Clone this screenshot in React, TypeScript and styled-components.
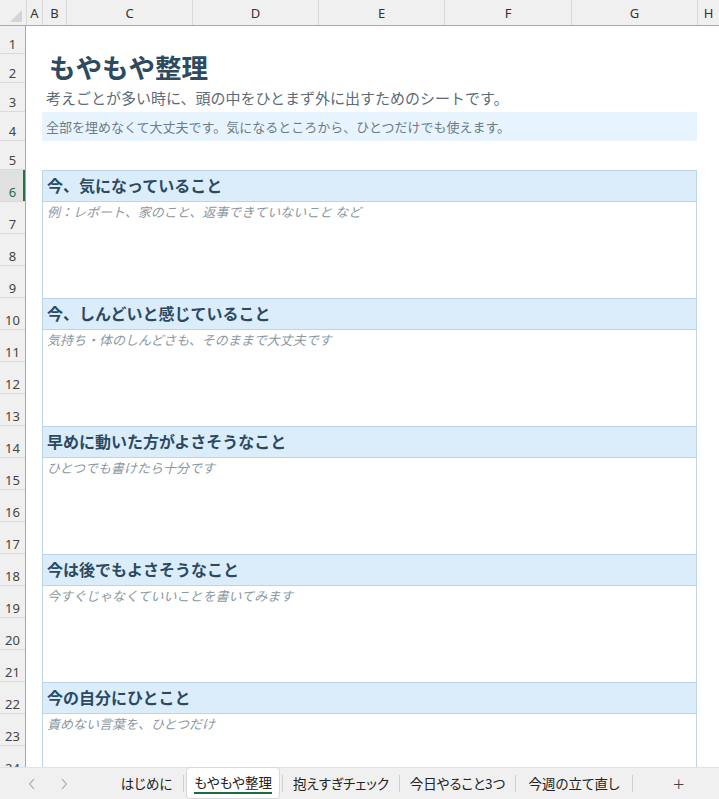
import React from "react";
import styled, { createGlobalStyle } from "styled-components";

const GlobalStyle = createGlobalStyle`
  html, body {
    margin: 0;
    padding: 0;
    background: #ffffff;
    overflow: hidden;
  }
  body {
    font-family: "Noto Sans CJK JP", "Noto Sans", sans-serif;
  }
`;

const COLUMNS = [
  { label: "A", width: 16 },
  { label: "B", width: 24 },
  { label: "C", width: 126 },
  { label: "D", width: 126 },
  { label: "E", width: 126 },
  { label: "F", width: 127 },
  { label: "G", width: 126 },
  { label: "H", width: 22 },
];

// 1〜5行目は29px、6行目以降は32px
const ROW_HEIGHTS = [28, 29, 29, 29, 29, ...Array(19).fill(32)];
const SELECTED_ROW = 6;

const SECTIONS = [
  { title: "今、気になっていること", hint: "例：レポート、家のこと、返事できていないこと など" },
  { title: "今、しんどいと感じていること", hint: "気持ち・体のしんどさも、そのままで大丈夫です" },
  { title: "早めに動いた方がよさそうなこと", hint: "ひとつでも書けたら十分です" },
  { title: "今は後でもよさそうなこと", hint: "今すぐじゃなくていいことを書いてみます" },
  { title: "今の自分にひとこと", hint: "責めない言葉を、ひとつだけ" },
];

const TABS = [
  { label: "はじめに", width: 73 },
  { label: "もやもや整理", width: 94, active: true },
  { label: "抱えすぎチェック", width: 116 },
  { label: "今日やること3つ", width: 115 },
  { label: "今週の立て直し", width: 116 },
];

const Window = styled.div`
  width: 719px;
  height: 799px;
  display: flex;
  flex-direction: column;
  overflow: hidden;
`;

const ColumnBar = styled.div`
  display: flex;
  height: 26px;
  flex-shrink: 0;
  background: #f0f0f0;
  border-bottom: 1px solid #a9a9a9;
  box-sizing: border-box;
`;

const Corner = styled.div`
  width: 26px;
  flex-shrink: 0;
  position: relative;
`;

const CornerMark = styled.div`
  position: absolute;
  right: 4px;
  bottom: 3px;
  width: 0;
  height: 0;
  border-left: 12px solid transparent;
  border-bottom: 12px solid #d4d4d4;
`;

const ColumnCell = styled.div<{ $width: number }>`
  width: ${(p) => p.$width}px;
  flex-shrink: 0;
  box-sizing: border-box;
  border-left: 1px solid #d9d9d9;
  display: flex;
  align-items: center;
  justify-content: center;
  font-family: "Noto Sans", "Open Sans", sans-serif;
  font-size: 13px;
  color: #333;
`;

const Main = styled.div`
  flex: 1;
  display: flex;
  overflow: hidden;
`;

const RowHeaders = styled.div`
  width: 26px;
  flex-shrink: 0;
  background: #f0f0f0;
  border-right: 1px solid #a9a9a9;
  box-sizing: border-box;
  display: flex;
  flex-direction: column;
`;

const RowNum = styled.div<{ $height: number; $selected?: boolean }>`
  height: ${(p) => p.$height}px;
  flex-shrink: 0;
  box-sizing: border-box;
  border-bottom: 1px solid #dadada;
  display: flex;
  align-items: flex-end;
  justify-content: center;
  line-height: 18px;
  font-family: "Noto Sans", "Open Sans", sans-serif;
  font-size: 13px;
  color: ${(p) => (p.$selected ? "#1e6e42" : "#444")};
  background: ${(p) => (p.$selected ? "#e1e1e1" : "transparent")};
  box-shadow: ${(p) => (p.$selected ? "inset -2px 0 0 #217346" : "none")};
`;

const Sheet = styled.div`
  flex: 1;
  padding-left: 16px;
  display: flex;
  flex-direction: column;
`;

const Row = styled.div<{ $height: number }>`
  height: ${(p) => p.$height}px;
  flex-shrink: 0;
  display: flex;
  align-items: center;
`;

const Title = styled.h1`
  margin: 0 0 2px 7px;
  font-size: 26.5px;
  font-weight: 700;
  color: #2e4a5e;
  line-height: 1;
`;

const Lead = styled.p`
  margin: 0 0 0 4px;
  font-size: 15px;
  color: #5c6b77;
`;

const Note = styled.div`
  width: 655px;
  height: 100%;
  background: #e8f4fd;
  display: flex;
  align-items: center;
  padding-left: 4px;
  box-sizing: border-box;
  font-size: 13px;
  color: #6d7b87;
`;

const Section = styled.section`
  width: 655px;
  flex-shrink: 0;
  box-sizing: border-box;
  border-left: 1px solid #bdd6e6;
  border-right: 1px solid #bdd6e6;
`;

const SectionHead = styled.div`
  height: 32px;
  box-sizing: border-box;
  border-top: 1px solid #bdd6e6;
  border-bottom: 1px solid #bdd6e6;
  background: #dbedfb;
  display: flex;
  align-items: center;
  padding: 0 0 3px 4px;
  font-size: 16px;
  font-weight: 700;
  color: #2c4a5f;
`;

const SectionBody = styled.div`
  height: 96px;
  box-sizing: border-box;
  padding: 0 4px;
  font-size: 13px;
  font-style: italic;
  color: #8c98a2;
  line-height: 20px;
`;

const TabBar = styled.div`
  height: 32px;
  flex-shrink: 0;
  background: #f0f0f0;
  border-top: 1px solid #e2e2e2;
  box-sizing: border-box;
  display: flex;
  align-items: center;
  font-size: 13.5px;
  color: #222;
  font-feature-settings: "palt";
`;

const Nav = styled.div`
  width: 110px;
  flex-shrink: 0;
  display: flex;
  align-items: center;
  gap: 24px;
  padding-left: 28px;
  box-sizing: border-box;
`;

const Tab = styled.div<{ $width: number; $active?: boolean }>`
  width: ${(p) => p.$width}px;
  height: ${(p) => (p.$active ? "32px" : "auto")};
  flex-shrink: 0;
  display: flex;
  align-items: center;
  justify-content: center;
  box-sizing: border-box;
  margin: ${(p) => (p.$active ? "-2px 2px 0" : "0")};
  background: ${(p) => (p.$active ? "#ffffff" : "transparent")};
  border: ${(p) => (p.$active ? "1px solid #d8d8d8" : "none")};
  border-radius: 4px;
`;

const TabLabel = styled.span<{ $active?: boolean }>`
  padding-bottom: 1px;
  border-bottom: 2px solid ${(p) => (p.$active ? "#1e6b40" : "transparent")};
  line-height: 18px;
  margin-top: 1px;
`;

const Divider = styled.div`
  width: 1px;
  height: 17px;
  flex-shrink: 0;
  background: #cfcfcf;
`;

const AddButton = styled.div`
  margin-left: 40px;
  font-size: 20px;
  font-weight: 300;
  color: #444;
  font-family: "Noto Sans", sans-serif;
`;

const Chevron: React.FC<{ dir: "left" | "right" }> = ({ dir }) => (
  <svg width="8" height="12" viewBox="0 0 8 12">
    <polyline
      points={dir === "left" ? "6,1 1.5,6 6,11" : "2,1 6.5,6 2,11"}
      fill="none"
      stroke="#b3b3b3"
      strokeWidth="1.2"
    />
  </svg>
);

const App: React.FC = () => {
  return (
    <Window>
      <GlobalStyle />
      <ColumnBar>
        <Corner>
          <CornerMark />
        </Corner>
        {COLUMNS.map((c) => (
          <ColumnCell key={c.label} $width={c.width}>
            {c.label}
          </ColumnCell>
        ))}
      </ColumnBar>

      <Main>
        <RowHeaders>
          {ROW_HEIGHTS.map((h, i) => (
            <RowNum key={i} $height={h} $selected={i + 1 === SELECTED_ROW}>
              {i + 1}
            </RowNum>
          ))}
        </RowHeaders>

        <Sheet>
          <Row $height={28} />
          <Row $height={29}>
            <Title>もやもや整理</Title>
          </Row>
          <Row $height={29}>
            <Lead>考えごとが多い時に、頭の中をひとまず外に出すためのシートです。</Lead>
          </Row>
          <Row $height={29}>
            <Note>全部を埋めなくて大丈夫です。気になるところから、ひとつだけでも使えます。</Note>
          </Row>
          <Row $height={29} />
          {SECTIONS.map((s) => (
            <Section key={s.title}>
              <SectionHead>{s.title}</SectionHead>
              <SectionBody>{s.hint}</SectionBody>
            </Section>
          ))}
        </Sheet>
      </Main>

      <TabBar>
        <Nav>
          <Chevron dir="left" />
          <Chevron dir="right" />
        </Nav>
        {TABS.map((t, i) => (
          <React.Fragment key={t.label}>
            {i > 0 && !t.active && !TABS[i - 1].active && <Divider />}
            {t.active && <Divider />}
            <Tab $width={t.width} $active={t.active}>
              <TabLabel $active={t.active}>{t.label}</TabLabel>
            </Tab>
            {t.active && <Divider />}
          </React.Fragment>
        ))}
        <Divider />
        <AddButton>+</AddButton>
      </TabBar>
    </Window>
  );
};

export default App;
